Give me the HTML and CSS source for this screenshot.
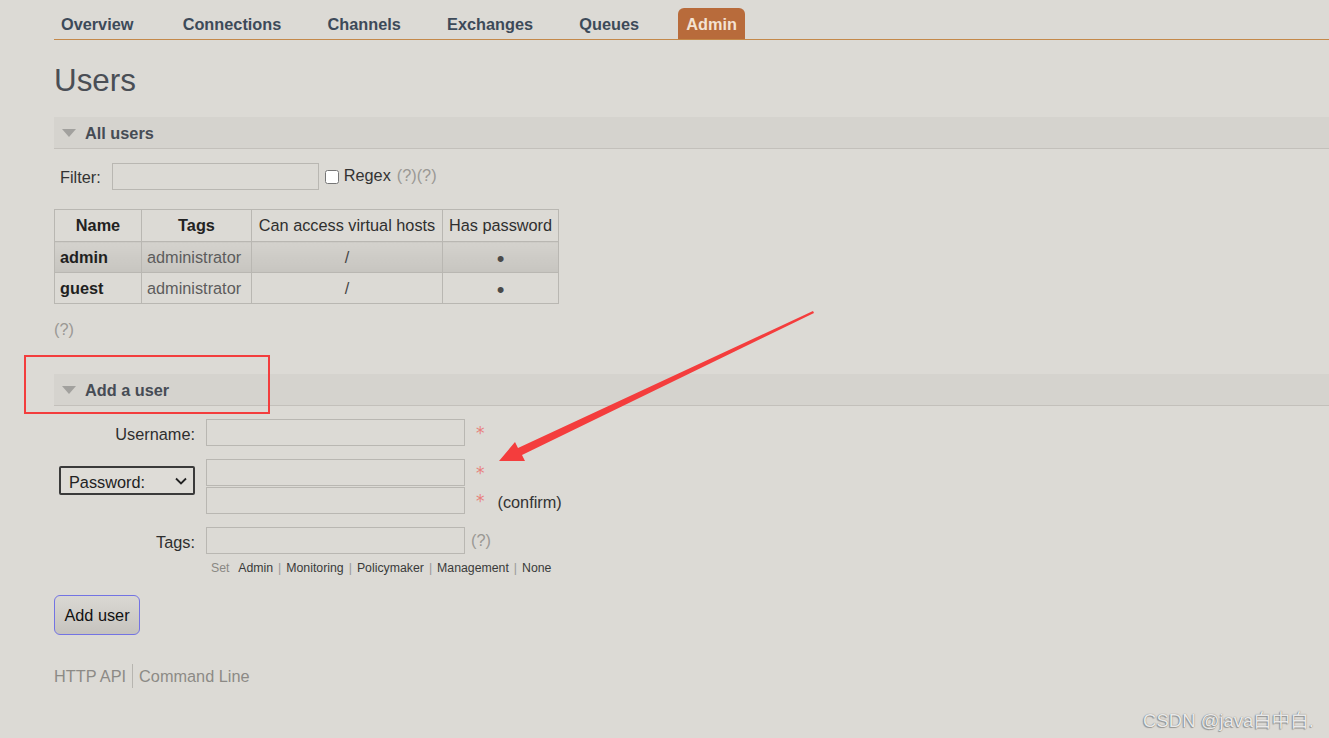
FILE: index.html
```html
<!DOCTYPE html>
<html lang="en">
<head>
<meta charset="utf-8">
<title>RabbitMQ Management: Users</title>
<link rel="stylesheet" href="styles.css">
</head>
<body>
<div class="page">
  <nav class="menu">
    <ul>
      <li><a href="#">Overview</a></li>
      <li><a href="#">Connections</a></li>
      <li><a href="#">Channels</a></li>
      <li><a href="#">Exchanges</a></li>
      <li><a href="#">Queues</a></li>
      <li class="selected"><a href="#">Admin</a></li>
    </ul>
  </nav>

  <main class="main">
    <h1 class="title">Users</h1>

    <section class="section">
      <h2 class="section-head">
        <svg class="caret" width="14" height="8" viewBox="0 0 14 8"><polygon points="0,0 14,0 7,8" /></svg>
        All users
      </h2>
      <div class="filter">
        <label class="filter-label" for="filter">Filter:</label>
        <input id="filter" class="text-input filter-input" type="text">
        <input id="regex" class="checkbox" type="checkbox">
        <label class="regex-label" for="regex">Regex</label>
        <span class="help">(?)(?)</span>
      </div>

      <table class="list">
        <colgroup>
          <col class="col-name"><col class="col-tags"><col class="col-vhosts"><col class="col-pw">
        </colgroup>
        <thead>
          <tr>
            <th class="strong">Name</th>
            <th class="strong">Tags</th>
            <th>Can access virtual hosts</th>
            <th>Has password</th>
          </tr>
        </thead>
        <tbody>
          <tr class="alt">
            <td class="user">admin</td>
            <td class="tag">administrator</td>
            <td class="center">/</td>
            <td class="center dot">•</td>
          </tr>
          <tr>
            <td class="user">guest</td>
            <td class="tag">administrator</td>
            <td class="center">/</td>
            <td class="center dot">•</td>
          </tr>
        </tbody>
      </table>
      <p class="help help-block">(?)</p>
    </section>

    <section class="section add-section">
      <h2 class="section-head">
        <svg class="caret" width="14" height="8" viewBox="0 0 14 8"><polygon points="0,0 14,0 7,8" /></svg>
        Add a user
      </h2>
      <form class="user-form">
        <label class="form-label" for="username">Username:</label>
        <input id="username" class="text-input field" type="text">
        <span class="mandatory">*</span>

        <div class="select-wrap">
          <select class="pw-select">
            <option>Password:</option>
            <option>Hashed password:</option>
            <option>No password</option>
          </select>
          <svg class="chevron" width="12" height="8" viewBox="0 0 12 8"><polyline points="1,1.5 6,6.5 11,1.5" /></svg>
        </div>
        <div class="pw-fields">
          <input class="text-input field" type="password">
          <input class="text-input field" type="password">
        </div>
        <div class="pw-notes">
          <span class="note-line"><span class="mandatory">*</span></span>
          <span class="note-line"><span class="mandatory">*</span><span class="confirm">(confirm)</span></span>
        </div>

        <label class="form-label tags-label" for="tags">Tags:</label>
        <div class="tags-field">
          <input id="tags" class="text-input field" type="text">
          <p class="tag-links">
            <span class="set">Set</span>
            <a href="#">Admin</a><span class="sep">|</span><a href="#">Monitoring</a><span class="sep">|</span><a href="#">Policymaker</a><span class="sep">|</span><a href="#">Management</a><span class="sep">|</span><a href="#">None</a>
          </p>
        </div>
        <span class="help tags-help">(?)</span>
      </form>
      <button class="btn" type="button">Add user</button>
    </section>

    <footer class="footer">
      <a href="#" class="footer-link">HTTP API</a>
      <a href="#" class="footer-link">Command Line</a>
    </footer>
  </main>

  <div class="annotation-box"></div>
  <svg class="annotation-arrow" width="1329" height="738" viewBox="0 0 1329 738">
    <polygon points="813,311 518,448 515,442 499,461 525,461 522,455 814,313" />
  </svg>
  <div class="watermark">CSDN @java白中白.</div>
</div>
</body>
</html>
```

FILE: styles.css
```css
* {
  box-sizing: border-box;
}

body {
  margin: 0;
  background: #dcdad5;
  color: #333;
  font-family: "Liberation Sans", Arial, sans-serif;
  font-size: 16.3px;
}

.page {
  position: relative;
  min-height: 738px;
  padding: 8px 0 0 54px;
  overflow: hidden;
}

/* navigation */
.menu ul {
  display: flex;
  gap: 32.25px;
  list-style: none;
  margin: 0;
  padding: 0;
  border-bottom: 1px solid #c4894a;
}

.menu a {
  display: block;
  height: 31px;
  line-height: 32px;
  padding: 0 7px;
  font-weight: bold;
  color: #3d4a59;
  text-decoration: none;
  border-radius: 6px 6px 0 0;
}

.menu li:first-child a {
  padding-right: 10px;
}

.menu .selected a {
  background: #b86b3b;
  color: #f3e2d2;
  padding: 0 8px;
}

/* heading */
.title {
  margin: 23px 0 18px;
  font-size: 31.4px;
  line-height: 36px;
  font-weight: normal;
  color: #4a4e55;
}

.section-head {
  display: flex;
  align-items: center;
  height: 32px;
  margin: 0;
  padding: 1px 0 0 8px;
  background: #d5d3ce;
  border-bottom: 1px solid #c3c0bb;
  font-size: 16.3px;
  font-weight: bold;
  color: #464c55;
}

.caret {
  fill: #a2a19e;
  margin-right: 9px;
}

/* filter */
.filter {
  display: flex;
  align-items: center;
  margin-top: 14px;
  padding-left: 6px;
}

.filter-label {
  padding-top: 2px;
}

.text-input {
  display: block;
  height: 27px;
  margin: 0;
  border: 1px solid #b9b7b2;
  border-radius: 0;
  background: transparent;
  font: inherit;
}

.filter-input {
  width: 207px;
  margin-left: 11px;
}

.checkbox {
  width: 14px;
  height: 14px;
  margin: 0 0 0 6px;
}

.regex-label {
  margin-left: 5px;
  margin-top: -2px;
}

.help {
  color: #9a9894;
}

.filter .help {
  margin-left: 6px;
  margin-top: -2px;
}

/* table */
.list {
  margin-top: 19px;
  border-collapse: collapse;
  table-layout: fixed;
  width: 504px;
}

.col-name { width: 87px; }
.col-tags { width: 110px; }
.col-vhosts { width: 191px; }
.col-pw { width: 116px; }

.list th,
.list td {
  border: 1px solid #b9b7b2;
  padding: 0 5px;
  white-space: nowrap;
}

.list th {
  height: 32px;
  font-weight: normal;
  color: #2f2f2f;
  text-align: center;
}

.list th.strong {
  font-weight: bold;
  color: #222;
}

.list td {
  height: 31px;
}

.list tr.alt td {
  background: linear-gradient(#d4d2cd, #c7c5c0);
}

.user {
  font-weight: bold;
  color: #1f1f1f;
}

.tag {
  color: #5c5c5c;
}

.center {
  text-align: center;
  color: #444;
}

.list td.dot {
  color: #4a4a4a;
  font-size: 22px;
  line-height: 1;
  padding-top: 3px;
}

.help-block {
  margin: 16px 0 0;
  line-height: 19px;
}

/* add user */
.add-section {
  margin-top: 35px;
}

.user-form {
  display: grid;
  grid-template-columns: 152px 259px auto;
  row-gap: 13px;
  margin-top: 13px;
  align-items: center;
}

.form-label {
  justify-self: end;
  padding: 4px 11px 0 0;
  line-height: 19px;
  color: #2e2e2e;
}

.mandatory {
  padding: 2px 0 0 11px;
  font-family: "DejaVu Sans", sans-serif;
  font-size: 17px;
  line-height: 25px;
  color: #e8807c;
}

.field {
  width: 259px;
}

.select-wrap {
  position: relative;
  justify-self: end;
  align-self: start;
  margin: 7px 11px 0 0;
}

.pw-select {
  display: block;
  width: 136px;
  height: 29px;
  margin: 0;
  padding: 2px 0 0 8px;
  appearance: none;
  -webkit-appearance: none;
  border: 2px solid #3a3a3a;
  border-radius: 2px;
  background: #dedcd7;
  color: #222;
  font: inherit;
}

.chevron {
  position: absolute;
  right: 8px;
  top: 11px;
  fill: none;
  stroke: #222;
  stroke-width: 1.8;
  pointer-events: none;
}

.pw-fields {
  display: flex;
  flex-direction: column;
  gap: 1px;
}

.pw-notes {
  display: flex;
  flex-direction: column;
  gap: 1px;
}

.note-line {
  display: flex;
  align-items: center;
  height: 27px;
}

.confirm {
  margin-left: 13px;
  padding-top: 3px;
  color: #333;
}

.tags-label,
.tags-help {
  align-self: start;
  line-height: 23px;
}

.tags-help {
  padding: 2px 0 0 6px;
}

.tag-links {
  margin: 7px 0 0;
  padding-left: 5px;
  font-size: 12.3px;
  line-height: 14px;
  white-space: nowrap;
  color: #444;
}

.tag-links .set {
  color: #8a8884;
  margin-right: 6px;
}

.tag-links a {
  color: #3a3a3a;
  text-decoration: none;
}

.tag-links .sep {
  margin: 0 5px;
  color: #999;
}

.btn {
  display: block;
  width: 86px;
  height: 40px;
  margin-top: 20px;
  padding: 0;
  border: 1px solid #7373e3;
  border-radius: 6px;
  background: linear-gradient(#dad8d3, #c6c3be);
  color: #111;
  font: inherit;
}

/* footer */
.footer {
  display: flex;
  align-items: center;
  margin-top: 29px;
  height: 24px;
}

.footer-link {
  color: #8c8a86;
  text-decoration: none;
  line-height: 24px;
}

.footer-link + .footer-link {
  border-left: 1px solid #b7b5b0;
  margin-left: 6px;
  padding-left: 6px;
}

/* annotations */
.annotation-box {
  position: absolute;
  left: 24px;
  top: 355px;
  width: 246px;
  height: 59px;
  border: 2px solid #f33d3d;
}

.annotation-arrow {
  position: absolute;
  left: 0;
  top: 0;
  fill: #f43d3d;
  pointer-events: none;
}

.watermark {
  position: absolute;
  right: 15px;
  top: 706px;
  font-family: "Liberation Sans", "Noto Sans CJK SC", sans-serif;
  font-size: 18.5px;
  color: rgba(250, 250, 250, 0.9);
  text-shadow: 0 0 1px #666, -1px 1px 1px rgba(0, 0, 0, 0.3);
}
```
